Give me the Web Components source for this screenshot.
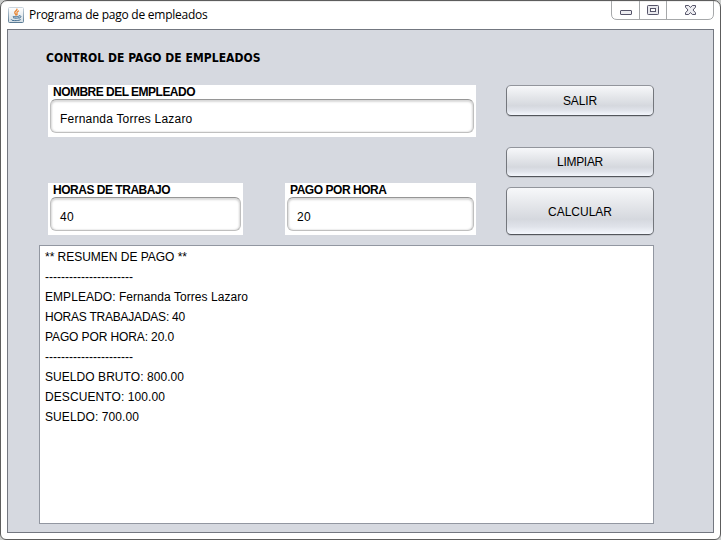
<!DOCTYPE html>
<html lang="es">
<head>
<meta charset="utf-8">
<title>Programa de pago de empleados</title>
<style>
html,body{margin:0;background:#c9cbca;overflow:hidden}
body{width:721px;height:540px;font:12px/20px "Liberation Sans",Arial,sans-serif;color:#000}
.entries{display:grid;grid-template-columns:195px 191px;column-gap:42px;row-gap:46px;grid-template-rows:52px 52px}
.wide{grid-column:1/3}
.form{display:grid;grid-template-columns:428px 148px;column-gap:30px;padding-left:9px}
.actions{display:grid;grid-template-rows:31px 31px 30px 10px 48px}
.actions push-button:nth-child(2){grid-row:3}
.actions push-button:nth-child(3){grid-row:5;padding-top:2px}
.heading{font:bold 12px/16px "DejaVu Sans Condensed","DejaVu Sans",sans-serif;padding-left:7px;height:35px;display:block}
</style>
</head>
<body>
<app-window>
  <fit-text slot="title" width="178.5">Programa de pago de empleados</fit-text>
  <fit-text class="heading" width="214.5">CONTROL DE PAGO DE EMPLEADOS</fit-text>
  <div class="form">
    <div class="entries">
      <entry-field class="wide"><fit-text slot="label" width="142">NOMBRE DEL EMPLEADO</fit-text><fit-text width="132.5">Fernanda Torres Lazaro</fit-text></entry-field>
      <entry-field><fit-text slot="label" width="117">HORAS DE TRABAJO</fit-text><fit-text width="14">40</fit-text></entry-field>
      <entry-field><fit-text slot="label" width="96.5">PAGO POR HORA</fit-text><fit-text width="14">20</fit-text></entry-field>
    </div>
    <div class="actions">
      <push-button><fit-text width="34">SALIR</fit-text></push-button>
      <push-button><fit-text width="46">LIMPIAR</fit-text></push-button>
      <push-button><fit-text width="64">CALCULAR</fit-text></push-button>
    </div>
  </div>
  <report-area>
    <fit-text width="142">** RESUMEN DE PAGO **</fit-text>
    <fit-text width="88">----------------------</fit-text>
    <fit-text width="203">EMPLEADO: Fernanda Torres Lazaro</fit-text>
    <fit-text width="140">HORAS TRABAJADAS: 40</fit-text>
    <fit-text width="129">PAGO POR HORA: 20.0</fit-text>
    <fit-text width="88">----------------------</fit-text>
    <fit-text width="139">SUELDO BRUTO: 800.00</fit-text>
    <fit-text width="120">DESCUENTO: 100.00</fit-text>
    <fit-text width="94">SUELDO: 700.00</fit-text>
  </report-area>
</app-window>
<script>
function define(name, html, ready) {
  customElements.define(name, class extends HTMLElement {
    constructor() {
      super();
      this.attachShadow({mode: 'open'}).innerHTML = html;
    }
    connectedCallback() { if (ready) ready(this); }
  });
}

define('app-window', `<style>
:host{display:flex;flex-direction:column;box-sizing:border-box;width:721px;height:540px;border:1px solid #5d5d5d;border-radius:7px 7px 6px 6px;background:#fff;padding:0 6px 6px;box-shadow:inset 0 1px #eee}
header{display:flex;height:28px;flex:none;align-items:flex-start}
.icon{display:block;width:16px;height:16px;margin:6px 5px 0 1px}
.title{font:12px/16px "Open Sans","Noto Sans",sans-serif;margin-top:6px;flex:1}
.controls{display:block;flex:none}
main{flex:1;box-sizing:border-box;border:1px solid #737780;background:#d6d9e0;padding:20px 0 0 31px;min-height:0}
</style>
<header>
<svg class="icon" viewBox="0 0 16 16"><defs><linearGradient id="b" x1="0" y1="0" x2="0" y2="1"><stop offset="0" stop-color="#cbd6df"/><stop offset="1" stop-color="#5a7b94"/></linearGradient><linearGradient id="f" x1="0" y1="0" x2="0" y2="1"><stop stop-color="#fff"/><stop offset="1" stop-color="#d3dde4"/></linearGradient></defs><rect x=".5" y=".5" width="15" height="15" rx="1" fill="url(#f)" stroke="url(#b)"/><g fill="none" stroke-linecap="round"><path d="M9 2.100c.5 1.400-3 2.200-2.200 4C7 6.800 8 7.100 7.800 8M10.500 4c-3 1.300-1 2-1.500 3.800" stroke="#e98532" stroke-width="1.300"/><path d="M5 9.200c-1.300.8 5.500.8 6.300-.2M5.400 10.800c1.700.6 4 .5 5.400 0M3.300 12.600c-.8 1.600 8 1.300 9.100.2M11.500 8.800c2.500-.2 1.700 2-.2 2.300" stroke="#416d91" stroke-width="1"/></g></svg>
<div class="title"><slot name="title"></slot></div>
<svg class="controls" width="103" height="19" viewBox="0 0 103 19"><path d="M.5 0v13q0 5.500 5.500 5.500h91q5.500 0 5.500-5.500V0M28.500 0v18M55.500 0v18" fill="none" stroke="#a6a8aa"/><rect x="9.500" y="9.500" width="11" height="4" rx=".5" fill="#ececf0" stroke="#555469"/><rect x="36.500" y="4.500" width="11" height="9" rx=".8" fill="#e8e8ed" stroke="#555469"/><rect x="39.500" y="7.500" width="5" height="3" fill="#fff" stroke="#555469"/><path d="M74.500 4.500h3.200l1.800 2 1.800-2h3.200v1.700L82 9l2.500 2.800v1.700h-3.200l-1.800-2-1.800 2h-3.200v-1.700L77 9l-2.500-2.800z" fill="#eeeef2" stroke="#555469" stroke-linejoin="round"/></svg>
</header><main><slot></slot></main>`);

define('entry-field', `<style>
:host{display:block;box-sizing:border-box;height:52px;background:#fff;padding:0 2px 4px 2px}
.label{font-weight:bold;line-height:14px;height:14px;padding-left:3px}
.box{box-sizing:border-box;height:34px;border:1px solid #bfbfbf;border-top-color:#969696;border-radius:6px;background:#fff;padding:9px 0 0 9px;box-shadow:inset 0 2px 2px #d9d9d9,inset 1px 0 2px #dedede,inset -1px 0 2px #dedede}
</style><div class="label"><slot name="label"></slot></div><div class="box"><slot></slot></div>`);

define('push-button', `<style>
:host{display:flex;align-items:center;justify-content:center;box-sizing:border-box;border:1px solid;border-color:#92959c #74777d #53565c;border-radius:5px;background:linear-gradient(#f7f8fa 0%,#e3e5e9 40%,#d5d8de 68%,#e0e3ea 84%,#f4f7fd 100%);box-shadow:0 1px 0 #bfc2c8}
</style><slot></slot>`);

define('report-area', `<style>
:host{display:flex;flex-direction:column;align-items:flex-start;box-sizing:border-box;width:615px;height:279px;margin-top:10px;border:1px solid #9297a1;background:#fff;padding:1px 5px}
</style><slot></slot>`);

// Spreads the run's letters so that it takes the width given in pixels.
define('fit-text', `<style>:host{display:inline-block;white-space:pre}span{display:inline-block;white-space:pre}</style><span><slot></slot></span>`, el => {
  const span = el.shadowRoot.querySelector('span');
  const natural = span.getBoundingClientRect().width;
  const n = el.textContent.length;
  span.style.letterSpacing = (el.getAttribute('width') - natural) / n + 'px';
});
</script>
</body>
</html>
